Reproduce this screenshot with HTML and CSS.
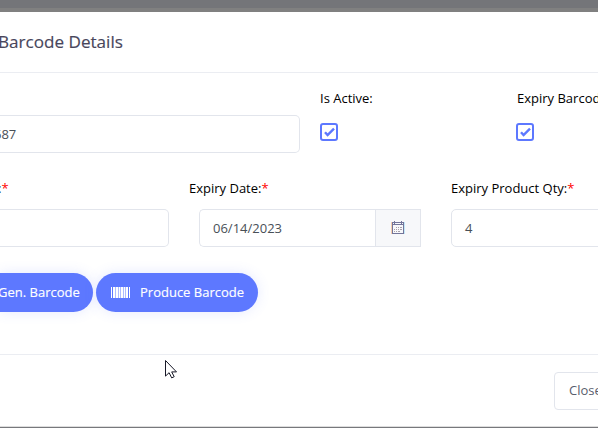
FILE: index.html
```html
<!DOCTYPE html>
<html lang="en">
<head>
<meta charset="utf-8">
<title>Barcode Details</title>
<link rel="stylesheet" href="styles.css">
</head>
<body>
<div class="backdrop"></div>
<main class="modal">
  <header class="modal-header"><h1>Barcode Details</h1></header>
  <section class="modal-body">
    <div class="row row-top">
      <div class="field barcode"><div class="input"><span class="value">687</span></div></div>
      <div class="field active">
        <label>Is Active:</label>
        <svg class="check" viewBox="0 0 18 18"><rect x="1" y="1" width="16" height="16" rx="2"/><path d="M5 9.2 7.6 12 14 5.7"/></svg>
      </div>
      <div class="field">
        <label class="nudge">Expiry Barcode:</label>
        <svg class="check" viewBox="0 0 18 18"><rect x="1" y="1" width="16" height="16" rx="2"/><path d="M5 9.2 7.6 12 14 5.7"/></svg>
      </div>
    </div>
    <div class="row row-mid">
      <div class="field product"><label>:<b>*</b></label><div class="input"></div></div>
      <div class="field expiry">
        <label>Expiry Date:<b>*</b></label>
        <div class="group">
          <div class="input">06/14/2023</div>
          <div class="addon">
            <svg class="calendar" viewBox="0 0 14 14" shape-rendering="crispEdges">
              <path class="edge-warm" d="M0 1h1v12H0z"/><path class="edge-cool" d="M13 1h1v12h-1z"/>
              <path class="ink" d="M1 1h12v12H1zM2 4v8h10V4zM2 2v1h10V2z" fill-rule="evenodd"/>
              <path class="ink" d="M3 0h1v3H3zM10 0h1v3h-1z"/>
              <path class="dots" d="M5 6h1v1H5zM7 6h1v1H7zM9 6h2v1H9zM3 8h1v1H3zM5 8h1v1H5zM7 8h1v1H7zM9 8h2v1H9zM3 10h1v1H3zM5 10h1v1H5zM7 10h2v1H7z"/>
            </svg>
          </div>
        </div>
      </div>
      <div class="field quantity"><label>Expiry Product Qty:<b>*</b></label><div class="input">4</div></div>
    </div>
    <div class="actions">
      <button class="pill pill-gen">Gen. Barcode</button>
      <button class="pill pill-produce">
        <svg class="bars" viewBox="0 0 19 11"><path d="M0 0h1v11H0zM2 0h2v11H2zM5 0h2v11H5zM8 0h1v11H8zM10 0h2v11h-2zM13 0h1v11h-1zM15 0h2v11h-2zM18 0h1v11h-1z"/><path class="thin" d="M4 0h1v11H4zM9 0h1v11H9zM12 0h1v11h-1zM7 0h1v11H7zM14 0h1v11h-1z"/></svg>
        <span>Produce Barcode</span>
      </button>
    </div>
  </section>
  <footer class="modal-footer"><button class="close">Close</button></footer>
</main>
<svg class="cursor" viewBox="0 0 13 20"><path d="M.5 1.5v15.6l3.6-3.4 2.6 5.2 2.5-1.2-2.5-4.8H11.5z"/></svg>
</body>
</html>
```
FILE: styles.css
```css
* { box-sizing: border-box; }
body {
  margin: 0;
  width: 598px;
  height: 428px;
  overflow: hidden;
  background: #77787c;
  font: 13px/20px "Open Sans", sans-serif;
  color: #000;
}
.backdrop { height: 12px; background: #747579; border-bottom: 4px solid #808080; }
.modal { height: 415px; background: #fff; border-bottom: 1px solid #ddd; overflow: hidden; }
.modal-header { height: 61px; border-bottom: 1px solid #ebedf2; display: flex; align-items: center; }
h1 { margin: 0 0 0 -2px; font-size: 17.1px; font-weight: 400; color: #48465b; white-space: nowrap; -webkit-text-stroke: .15px #48465b; }
.modal-body { height: 281px; padding-top: 15px; }
.row { display: flex; white-space: nowrap; }
.row-top { height: 90px; }
.row-mid { height: 95px; }
.field { flex: none; }
label { display: block; height: 21px; }
label b { color: #f00; font-weight: 400; }
.nudge { padding-left: 1px; }
.input {
  height: 38px;
  border: 1px solid #e2e5ec;
  border-radius: 5px;
  padding: 0 13px;
  line-height: 37px;
  color: #495057;
}
.barcode { width: 300px; margin-right: 20px; padding-top: 27px; }
.barcode .input, .product .input { border-left: 0; border-radius: 0 5px 5px 0; }
.barcode .input { padding: 0; }
.value { margin-left: -6px; }
.active { width: 196px; }
.check { display: block; width: 18px; height: 18px; margin-top: 14px; fill: none; stroke: #5d78ff; stroke-width: 2; }
.check path { stroke-width: 2.4; }
.row-mid label { height: 31px; }
.product { width: 169px; }
.product label { margin-left: -2px; }
.expiry { width: 282px; padding-left: 20px; }
.group { display: flex; width: 222px; margin-left: 10px; }
.group .input { width: 176px; border-right: 0; border-radius: 5px 0 0 5px; }
.addon { width: 46px; height: 38px; background: #f7f8fa; border: 1px solid #e2e5ec; display: flex; justify-content: center; align-items: center; }
.calendar { width: 14px; height: 14px; }
.ink { fill: #73759a; }
.dots { fill: #a9a0aa; }
.edge-warm { fill: #f5cfae; }
.edge-cool { fill: #c3e9f8; }
.quantity { width: 260px; }
.actions { display: flex; gap: 3px; }
button { font: inherit; margin: 0; }
.pill {
  height: 39px;
  border: 0;
  display: flex;
  align-items: center;
  white-space: nowrap;
  background: #5d78ff;
  color: #fff;
  box-shadow: 0 0 13px rgba(93, 120, 255, .16);
  -webkit-text-stroke: .15px #fff;
}
.pill-gen { width: 93px; padding: 0 0 1px; border-radius: 0 20px 20px 0; text-indent: -2px; }
.pill-produce { width: 162px; padding: 0 0 1px 15px; border-radius: 20px; gap: 10px; }
.bars { width: 19px; height: 11px; fill: #fff; }
.thin { opacity: .5; }
.modal-footer { border-top: 1px solid #ebedf2; padding: 17px 0 0 554px; }
.close { width: 72px; height: 38px; border: 1px solid #e2e5ec; border-radius: 4px; background: #fff; color: #595d6e; padding: 0 0 2px 14px; text-align: left; }
.cursor { position: absolute; left: 165px; top: 359px; width: 13px; height: 20px; fill: #fff; stroke: #171827; stroke-width: 1; }
```
